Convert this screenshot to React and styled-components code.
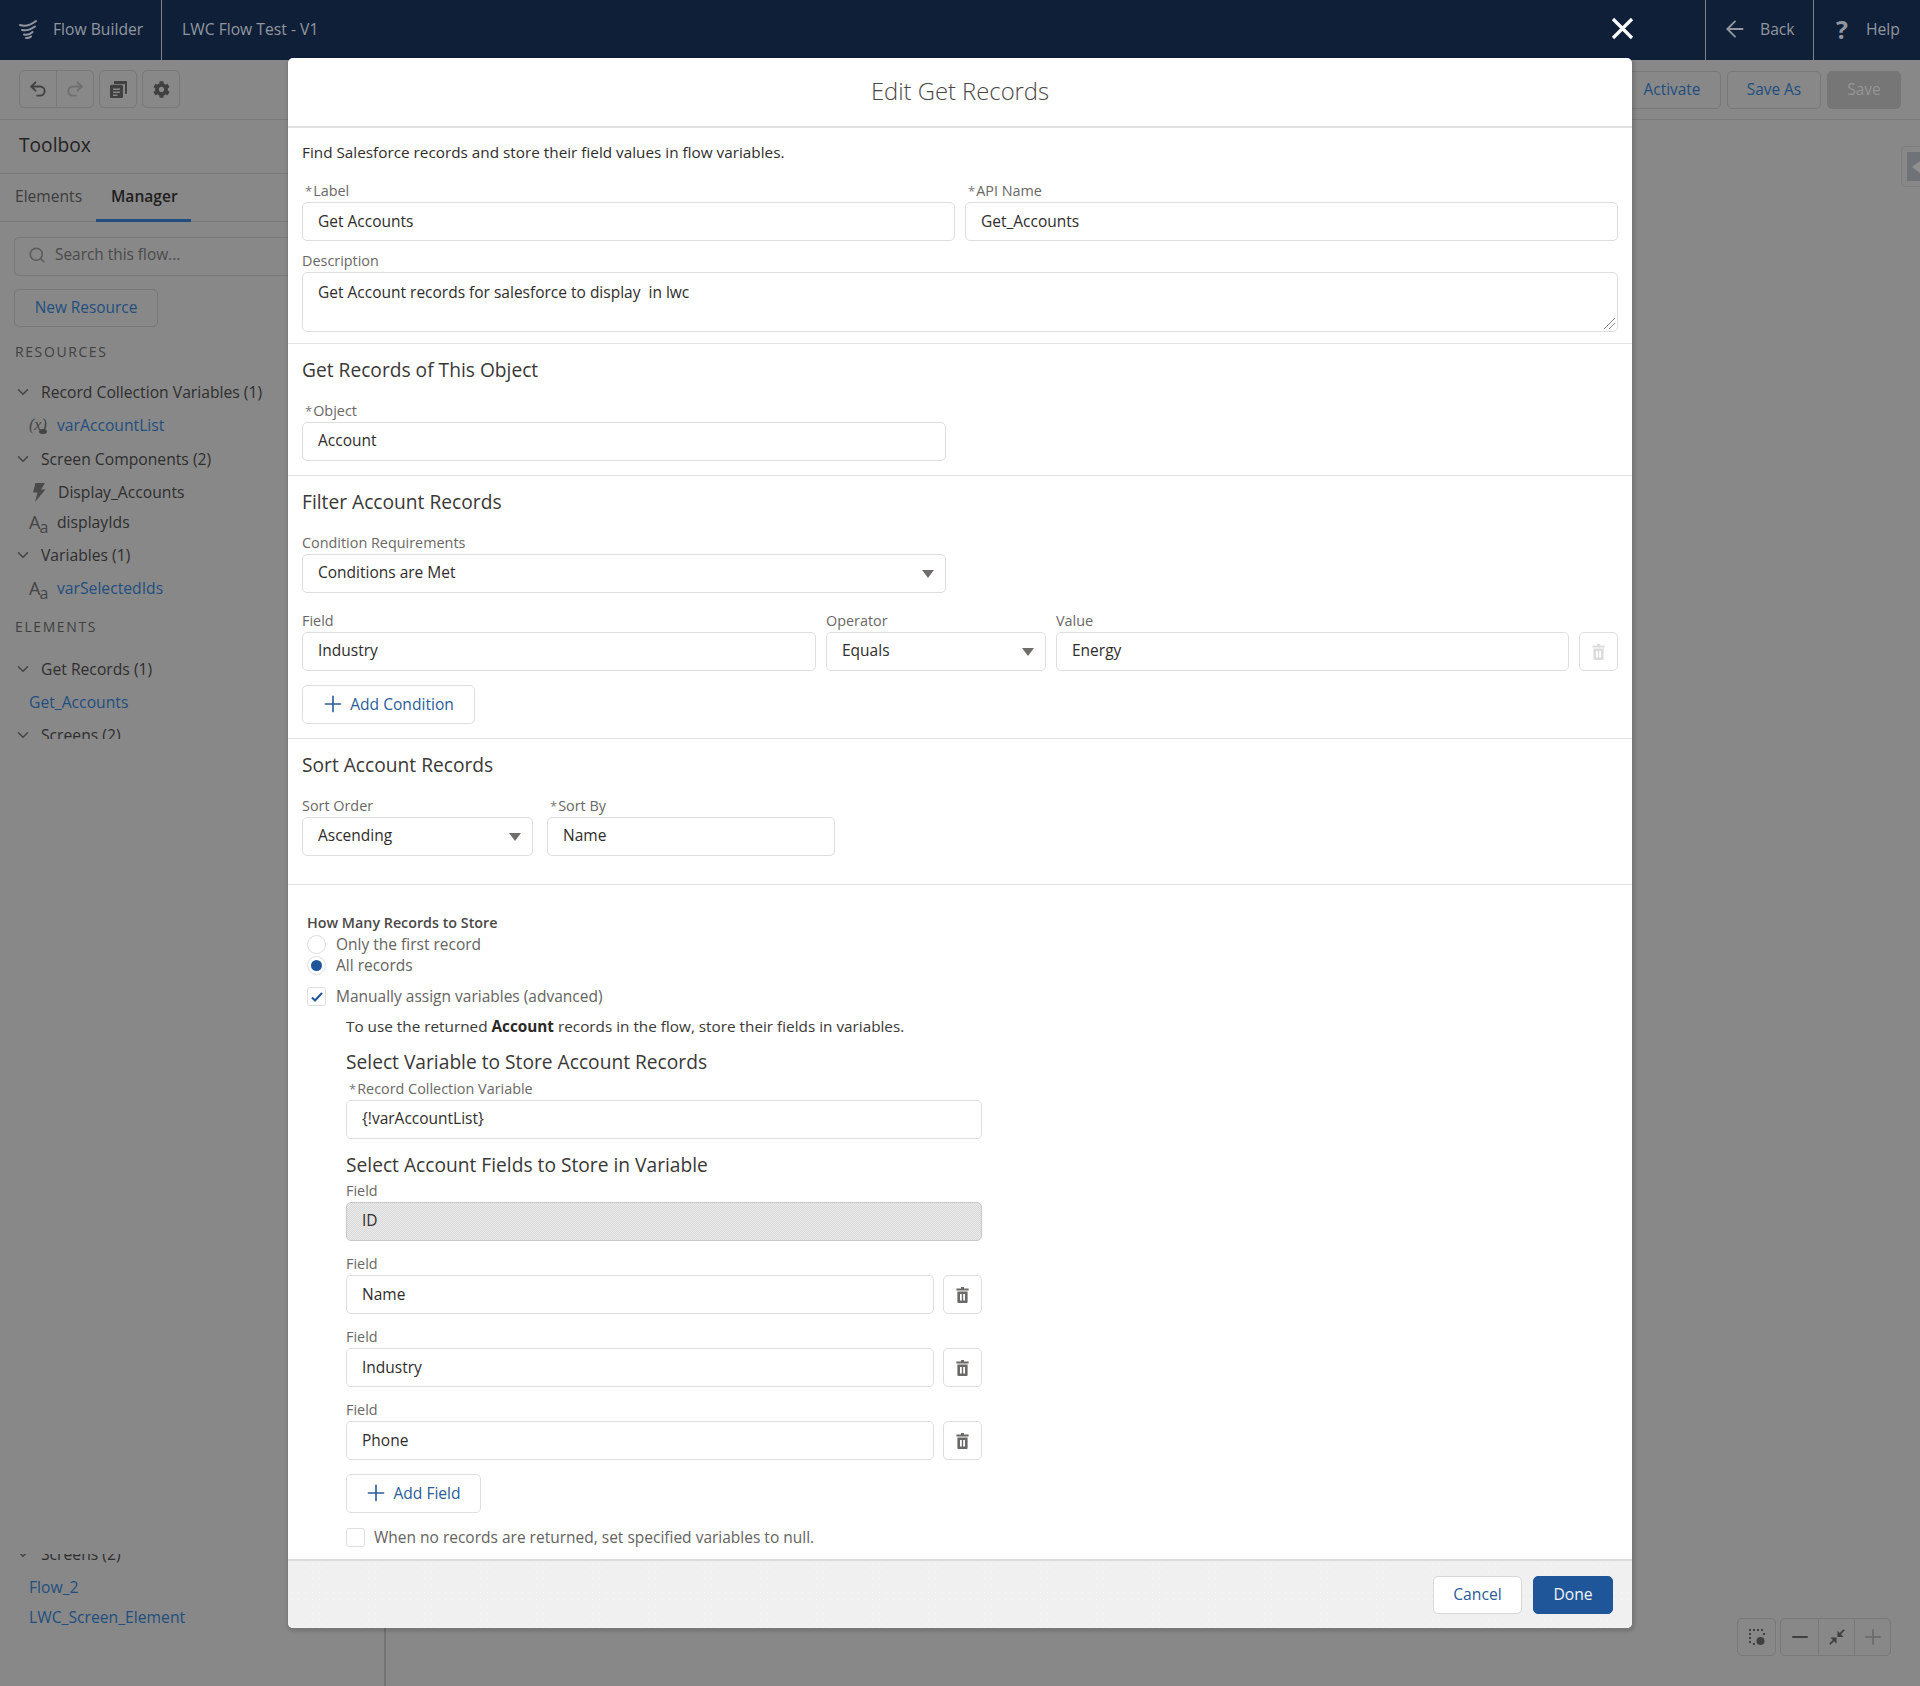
import React from "react";
import styled, { createGlobalStyle } from "styled-components";
import { ArrowLeft, ChevronDown, Minus, Plus, Redo2, Search, Undo2 } from "lucide-react";
import { FaCog } from "react-icons/fa";

const GlobalStyle = createGlobalStyle`
  html, body { margin: 0; padding: 0; background: #888; }
  * { box-sizing: border-box; }
  body { font-family: "Open Sans", "Noto Sans", sans-serif; }
`;

const Page = styled.div`
  position: relative;
  width: 1920px;
  height: 1686px;
  overflow: hidden;
  background: #888;
  display: flex;
  flex-direction: column;
`;

/* top bar */
const TopBar = styled.header`
  height: 60px;
  flex: none;
  display: flex;
  background: #0f1f38;
  color: #92979f;
  font-size: 15.7px;
`;
const BarCell = styled.div`
  display: flex;
  align-items: center;
  gap: ${(p) => p.$gap || 0}px;
  width: ${(p) => p.$width || "auto"};
  padding: 0 0 2px ${(p) => p.$pad || 0}px;
  border-right: ${(p) => (p.$divider ? "1px solid #7d828c" : "none")};
  border-left: ${(p) => (p.$before ? "1px solid #7d828c" : "none")};
`;
const Spacer = styled.div`
  flex: 1;
`;
const HelpMark = styled.strong`
  font-size: 25px;
  line-height: 1;
`;

/* toolbar */
const ToolBar = styled.div`
  height: 60px;
  flex: none;
  display: flex;
  align-items: flex-start;
  padding: 10px 19px 0;
  border-bottom: 1px solid #787878;
`;
const ToolGroup = styled.div`
  display: flex;
  height: 38px;
  border: 1px solid #787878;
  border-radius: 5px;
  margin-right: ${(p) => p.$mr ?? 5}px;
`;
const ToolBtn = styled.div`
  width: ${(p) => p.$w || 36}px;
  display: flex;
  align-items: center;
  justify-content: center;
  color: ${(p) => (p.$off ? "#6f6f6f" : "#404040")};
  & + & { border-left: 1px solid #787878; }
`;
const SaveBtn = styled.div`
  height: 38px;
  width: ${(p) => p.$w}px;
  margin-left: 6px;
  margin-top: 1px;
  padding-bottom: 2px;
  display: flex;
  align-items: center;
  justify-content: center;
  font-size: 15.4px;
  border-radius: 5px;
  border: 1px solid ${(p) => (p.$off ? "#767676" : "#787878")};
  background: ${(p) => (p.$off ? "#767676" : "transparent")};
  color: ${(p) => (p.$off ? "#959595" : "#1f4e7f")};
`;

/* left panel */
const Body = styled.div`
  flex: 1;
  display: flex;
  min-height: 0;
`;
const Sidebar = styled.aside`
  width: 386px;
  flex: none;
  border-right: 2px solid #747474;
  display: flex;
  flex-direction: column;
`;
const ToolboxTitle = styled.div`
  height: 54px;
  flex: none;
  display: flex;
  align-items: center;
  padding: 0 0 4px 19px;
  font-size: 19.2px;
  color: #232323;
  border-bottom: 1px solid #787878;
`;
const Tabs = styled.div`
  height: 48px;
  flex: none;
  display: flex;
  border-bottom: 1px solid #787878;
`;
const Tab = styled.div`
  position: relative;
  width: ${(p) => p.$w}px;
  padding-left: ${(p) => p.$pad}px;
  line-height: 44px;
  font-size: 15.6px;
  font-weight: ${(p) => (p.$active ? 600 : 400)};
  color: ${(p) => (p.$active ? "#1e1e1e" : "#3c3c3c")};
  border-bottom: ${(p) => (p.$active ? "3px solid #1f4e7f" : "none")};
  height: ${(p) => (p.$active ? "48px" : "auto")};
`;
const SearchBox = styled.div`
  height: 39px;
  margin: 15px 0 0 14px;
  width: 360px;
  flex: none;
  display: flex;
  align-items: center;
  gap: 9px;
  padding: 0 0 4px 13px;
  border: 1px solid #787878;
  border-radius: 5px;
  font-size: 15.4px;
  color: #4a4a4a;
`;
const NewResource = styled.div`
  width: 144px;
  height: 38px;
  flex: none;
  margin: 13px 0 0 14px;
  padding-bottom: 2px;
  display: flex;
  align-items: center;
  justify-content: center;
  border: 1px solid #787878;
  border-radius: 5px;
  font-size: 15.4px;
  color: #1f4e7f;
`;
const Caps = styled.div`
  height: 20px;
  line-height: 20px;
  margin: ${(p) => p.$mt}px 0 0 15px;
  font-size: 14px;
  letter-spacing: 1.6px;
  color: #404040;
`;
const TreeClip = styled.div`
  height: ${(p) => p.$h}px;
  flex: none;
  overflow: hidden;
  margin-top: ${(p) => p.$mt || 0}px;
`;
const TreeRow = styled.div`
  height: 30px;
  display: flex;
  align-items: center;
  margin-top: ${(p) => p.$gap ?? 3}px;
  padding-left: ${(p) => p.$pad ?? 14}px;
  font-size: 15.7px;
  color: ${(p) => (p.$link ? "#1f4e7f" : "#2e2e2e")};
  white-space: nowrap;
`;
const TreeIcon = styled.span`
  width: ${(p) => p.$w || 27}px;
  flex: none;
  display: inline-flex;
  align-items: center;
  color: #444;
`;
const VarGlyph = styled.span`
  position: relative;
  font-family: "Liberation Serif", serif;
  font-style: italic;
  font-size: 16px;
  color: #444;
  &::after {
    content: "";
    position: absolute;
    right: 0;
    bottom: 0;
    width: 8px;
    height: 5px;
    border-radius: 50%;
    background: #444;
  }
`;
const TextGlyph = styled.span`
  font-size: 18px;
  color: #444;
  small {
    font-size: 16px;
    position: relative;
    top: 4px;
    margin-left: -1px;
  }
`;

/* canvas */
const Canvas = styled.div`
  position: relative;
  flex: 1;
`;
const CollapseTab = styled.div`
  position: absolute;
  top: 26px;
  right: 0;
  width: 19px;
  height: 41px;
  padding: 5px 0 5px 5px;
  border: 1px solid #7e7e7e;
  border-right: none;
  border-radius: 5px 0 0 5px;
`;
const CollapseInner = styled.div`
  width: 100%;
  height: 100%;
  background: #6f7378;
  display: flex;
  align-items: center;
  justify-content: flex-end;
  &::after {
    content: "";
    border-style: solid;
    border-width: 6px 8px 6px 0;
    border-color: transparent #909090 transparent transparent;
  }
`;
const ZoomBar = styled.div`
  position: absolute;
  right: 29px;
  bottom: 30px;
  display: flex;
  gap: 4px;
`;

/* modal */
const Modal = styled.section`
  position: absolute;
  left: 288px;
  top: 58px;
  width: 1344px;
  height: 1570px;
  background: #fff;
  border-radius: 5px;
  box-shadow: 1px 2px 3px 2px rgba(0, 0, 0, 0.12);
  display: flex;
  flex-direction: column;
`;
const CloseBtn = styled.div`
  position: absolute;
  top: -41px;
  right: -2px;
  width: 23px;
  height: 23px;
  color: #fff;
`;
const ModalHead = styled.div`
  height: 70px;
  flex: none;
  display: flex;
  align-items: center;
  justify-content: center;
  padding-bottom: 2px;
  font-size: 23.8px;
  font-weight: 300;
  color: #4a4846;
  border-bottom: 2px solid #e0e0e0;
`;
const ModalBody = styled.div`
  flex: 1;
  min-height: 0;
  overflow: hidden;
`;
const Section = styled.div`
  padding: 14px 14px ${(p) => p.$pb ?? 14}px;
  border-bottom: ${(p) => (p.$last ? "none" : "1px solid #e2e2e2")};
`;
const Intro = styled.p`
  margin: 0 0 19px;
  line-height: 20px;
  font-size: 15.3px;
  color: #2f2d2b;
`;
const Row = styled.div`
  display: flex;
  gap: ${(p) => p.$gap ?? 10}px;
  margin-top: ${(p) => p.$mt || 0}px;
  align-items: flex-end;
`;
const Field = styled.div`
  width: ${(p) => p.$w || "auto"};
  flex: ${(p) => (p.$w ? "none" : 1)};
  margin-top: ${(p) => p.$mt || 0}px;
`;
const Label = styled.div`
  height: 21px;
  line-height: 19px;
  font-size: 14.4px;
  color: #6a6866;
  padding-left: ${(p) => (p.$required ? 3 : 0)}px;
  &::before {
    content: ${(p) => (p.$required ? '"*"' : "none")};
    margin-right: 1px;
    font-size: 13px;
    color: #7a7876;
  }
`;
const Box = styled.div`
  position: relative;
  height: ${(p) => p.$h || 39}px;
  display: flex;
  align-items: ${(p) => (p.$area ? "flex-start" : "center")};
  justify-content: space-between;
  padding: ${(p) => (p.$area ? "8px 14px 0 15px" : `0 14px ${p.$low ? 1 : 3}px 15px`)};
  background: ${(p) =>
    p.$disabled ? "repeating-conic-gradient(#d9d9d9 0 25%, #ebebeb 0 50%) 0 0 / 2px 2px" : "#fff"};
  border: 1px solid ${(p) => (p.$disabled ? "#c8c8c8" : "#dedede")};
  border-radius: 5px;
  font-size: 15.5px;
  color: #2f2d2b;
`;
const Caret = styled.span`
  border-style: solid;
  border-width: 8px 6.5px 0;
  border-color: #706e6b transparent transparent;
  margin: 4px -3px 0 0;
`;
const Grip = styled.svg`
  position: absolute;
  right: 1px;
  bottom: 1px;
`;
const SectionTitle = styled.h3`
  margin: 0 0 ${(p) => p.$mb ?? 19}px;
  height: 24px;
  line-height: 23px;
  font-size: 19.2px;
  font-weight: 400;
  color: #3a3836;
`;
const AddBtn = styled.div`
  width: ${(p) => p.$w}px;
  height: 39px;
  margin-top: ${(p) => p.$mt}px;
  padding: 0 3px 2px 0;
  display: flex;
  align-items: center;
  justify-content: center;
  gap: 4px;
  border: 1px solid #dedede;
  border-radius: 5px;
  font-size: 15.6px;
  color: #2a5c98;
`;
const IconBtn = styled.div`
  width: 39px;
  height: 39px;
  flex: none;
  display: flex;
  align-items: center;
  justify-content: center;
  border: 1px solid #dedede;
  border-radius: 5px;
  color: ${(p) => (p.$off ? "#dcdcdc" : "#6b6967")};
`;
const GroupLabel = styled.div`
  height: 21px;
  line-height: 20px;
  margin: 14px 0 0 5px;
  font-size: 14.3px;
  font-weight: 600;
  color: #4a4846;
`;
const ChoiceRow = styled.div`
  height: 21px;
  margin: ${(p) => p.$mt || 0}px 0 0 5px;
  padding-bottom: 2px;
  display: flex;
  align-items: center;
  gap: 10px;
  font-size: 15.5px;
  color: #656361;
`;
const Radio = styled.span`
  width: 19px;
  height: 19px;
  flex: none;
  margin-top: 2px;
  border: 1px solid #dedede;
  border-radius: 50%;
  display: flex;
  align-items: center;
  justify-content: center;
  &::after {
    content: "";
    width: 11px;
    height: 11px;
    border-radius: 50%;
    background: ${(p) => (p.$on ? "#1f5699" : "transparent")};
  }
`;
const Check = styled.span`
  width: 19px;
  height: 19px;
  flex: none;
  margin-top: 2px;
  display: flex;
  align-items: center;
  justify-content: center;
  border: 1px solid #dedede;
  border-radius: 3px;
`;
const Indented = styled.div`
  width: 636px;
  margin-left: 44px;
`;
const Hint = styled.p`
  margin: 9px 0 0;
  line-height: 20px;
  font-size: 15.3px;
  color: #3a3836;
  white-space: nowrap;
  b {
    font-weight: 700;
    color: #2b2927;
  }
`;
const SubTitle = styled(SectionTitle)`
  margin: ${(p) => p.$mt}px 0 ${(p) => p.$mb}px;
  white-space: nowrap;
`;
const NullRow = styled(ChoiceRow)`
  margin-left: 0;
  gap: 9px;
`;
const Footer = styled.div`
  height: 69px;
  flex: none;
  display: flex;
  align-items: center;
  justify-content: flex-end;
  gap: 11px;
  padding-right: 19px;
  border-top: 2px solid #dcdcdc;
  border-radius: 0 0 5px 5px;
  background-color: #f0f0f0;
  background-image: radial-gradient(#f8f8f8 0.6px, transparent 0.8px);
  background-size: 7px 7px;
`;
const FootBtn = styled.div`
  width: ${(p) => p.$w}px;
  height: 38px;
  padding-bottom: 1px;
  display: flex;
  align-items: center;
  justify-content: center;
  border-radius: 5px;
  font-size: 15.7px;
  border: 1px solid ${(p) => (p.$primary ? "#1f5699" : "#d8d8d8")};
  background: ${(p) => (p.$primary ? "#1f5699" : "#fff")};
  color: ${(p) => (p.$primary ? "#f4f4f4" : "#2a5c98")};
`;

const Trash = () => (
  <svg width="13" height="16" viewBox="0 0 13 16" fill="currentColor">
    <path d="M5 0h3v1.4h4.6V3.4H.4V1.4H5zM1.4 4.6h10.200V15a1 1 0 0 1-1 1H2.400a1 1 0 0 1-1-1zM4 7v6.500h1.800V7zm3.200 0v6.500H9V7z" fillRule="evenodd" />
  </svg>
);

const FlowLogo = () => (
  <svg width="19" height="20" viewBox="0 0 19 20" fill="none" stroke="#92979f" strokeWidth="2" strokeLinecap="round">
    <path d="M1 6c4 1.500 10 .5 16-4" />
    <path d="M3 11c4 1 8 0 13-3.500" />
    <path d="M5 15.500c3 .8 6 0 8.500-2.500" />
    <path d="M7 19c2 .2 3.500-.2 5-1.500" />
  </svg>
);

const CopyIcon = () => (
  <svg width="17" height="17" viewBox="0 0 17 17" fill="#404040">
    <path d="M4 0h12a1 1 0 0 1 1 1v11a1 1 0 0 1-1 1h-1V3H4z" />
    <path d="M1.500 3.800h10a1.500 1.500 0 0 1 1.500 1.500v10.200a1.500 1.500 0 0 1-1.500 1.500h-10A1.500 1.500 0 0 1 0 15.500V5.300a1.500 1.500 0 0 1 1.500-1.500zM3 7.500v1.500h7V7.500zm0 3v1.500h7v-1.500zm0 3V15h4.500v-1.500z" fillRule="evenodd" />
  </svg>
);

const Bolt = () => (
  <svg width="14" height="19" viewBox="0 0 14 19" fill="#4a4a4a">
    <path d="M3.500 0h9.500L9 6.500h4.500L3 19l2.500-9.500H1z" />
  </svg>
);

const Marquee = () => (
  <svg width="16" height="16" viewBox="0 0 16 16" fill="#404040">
    <path d="M0 0h2v2H0zM4 0h2v2H4zM8 0h2v2H8zM12 0h2v2h-2zM0 4h2v2H0zM0 8h2v2H0zM0 12h2v2H0zM4 14h2v2H4zM14 4h2v2h-2z" />
    <circle cx="11.500" cy="12" r="4" />
  </svg>
);

const Shrink = () => (
  <svg width="16" height="16" viewBox="0 0 18 18" fill="#404040" stroke="#404040">
    <path d="M11 7l6-6" strokeWidth="2" fill="none" />
    <path d="M9.500 2v7h7z" stroke="none" />
    <path d="M7 11l-6 6" strokeWidth="2" fill="none" />
    <path d="M1.500 9.500h7v7z" stroke="none" />
  </svg>
);

const fieldRows = ["Name", "Industry", "Phone"];

const App = () => (
  <Page>
    <GlobalStyle />
    <TopBar>
      <BarCell $width="162px" $pad={19} $gap={15} $divider>
        <FlowLogo />
        <span>Flow Builder</span>
      </BarCell>
      <BarCell $pad={20}>LWC Flow Test - V1</BarCell>
      <Spacer />
      <BarCell $width="108px" $pad={16} $gap={12} $before>
        <ArrowLeft size={26} strokeWidth={1.7} />
        <span>Back</span>
      </BarCell>
      <BarCell $width="107px" $pad={22} $gap={18} $before>
        <HelpMark>?</HelpMark>
        <span>Help</span>
      </BarCell>
    </TopBar>
    <ToolBar>
      <ToolGroup>
        <ToolBtn>
          <Undo2 size={20} strokeWidth={2.2} />
        </ToolBtn>
        <ToolBtn $w={37} $off>
          <Redo2 size={20} strokeWidth={2.2} />
        </ToolBtn>
      </ToolGroup>
      <ToolGroup>
        <ToolBtn>
          <CopyIcon />
        </ToolBtn>
      </ToolGroup>
      <ToolGroup>
        <ToolBtn>
          <FaCog size={17} />
        </ToolBtn>
      </ToolGroup>
      <Spacer />
      <SaveBtn $w={98}>Activate</SaveBtn>
      <SaveBtn $w={94}>Save As</SaveBtn>
      <SaveBtn $w={74} $off>
        Save
      </SaveBtn>
    </ToolBar>
    <Body>
      <Sidebar>
        <ToolboxTitle>Toolbox</ToolboxTitle>
        <Tabs>
          <Tab $w={96} $pad={15}>
            Elements
          </Tab>
          <Tab $w={95} $pad={15} $active>
            Manager
          </Tab>
        </Tabs>
        <SearchBox>
          <Search size={18} color="#5a5a5a" />
          <span>Search this flow...</span>
        </SearchBox>
        <NewResource>New Resource</NewResource>
        <Caps $mt={15}>RESOURCES</Caps>
        <TreeClip $h={377}>
          <TreeRow $gap={15}>
            <TreeIcon>
              <ChevronDown size={18} />
            </TreeIcon>
            Record Collection Variables (1)
          </TreeRow>
          <TreeRow $pad={29} $link>
            <TreeIcon $w={28}>
              <VarGlyph>(x)</VarGlyph>
            </TreeIcon>
            varAccountList
          </TreeRow>
          <TreeRow $gap={4}>
            <TreeIcon>
              <ChevronDown size={18} />
            </TreeIcon>
            Screen Components (2)
          </TreeRow>
          <TreeRow $pad={32}>
            <TreeIcon $w={26}>
              <Bolt />
            </TreeIcon>
            Display_Accounts
          </TreeRow>
          <TreeRow $pad={29} $gap={0}>
            <TreeIcon $w={28}>
              <TextGlyph>
                A<small>a</small>
              </TextGlyph>
            </TreeIcon>
            displayIds
          </TreeRow>
          <TreeRow>
            <TreeIcon>
              <ChevronDown size={18} />
            </TreeIcon>
            Variables (1)
          </TreeRow>
          <TreeRow $pad={29} $link>
            <TreeIcon $w={28}>
              <TextGlyph>
                A<small>a</small>
              </TextGlyph>
            </TreeIcon>
            varSelectedIds
          </TreeRow>
          <Caps $mt={14}>ELEMENTS</Caps>
          <TreeRow $gap={17}>
            <TreeIcon>
              <ChevronDown size={18} />
            </TreeIcon>
            Get Records (1)
          </TreeRow>
          <TreeRow $pad={29} $link>
            Get_Accounts
          </TreeRow>
          <TreeRow>
            <TreeIcon>
              <ChevronDown size={18} />
            </TreeIcon>
            Screens (2)
          </TreeRow>
        </TreeClip>
        <TreeClip $h={110} $mt={815}>
          <TreeRow $gap={-15}>
            <TreeIcon>
              <ChevronDown size={18} />
            </TreeIcon>
            Screens (2)
          </TreeRow>
          <TreeRow $pad={29} $link>
            Flow_2
          </TreeRow>
          <TreeRow $pad={29} $gap={0} $link>
            LWC_Screen_Element
          </TreeRow>
        </TreeClip>
      </Sidebar>
      <Canvas>
        <CollapseTab>
          <CollapseInner />
        </CollapseTab>
        <ZoomBar>
          <ToolGroup $mr={0}>
            <ToolBtn $w={37}>
              <Marquee />
            </ToolBtn>
          </ToolGroup>
          <ToolGroup $mr={0}>
            <ToolBtn $w={37}>
              <Minus size={24} strokeWidth={2.2} />
            </ToolBtn>
            <ToolBtn $w={36}>
              <Shrink />
            </ToolBtn>
            <ToolBtn $w={36} $off>
              <Plus size={24} />
            </ToolBtn>
          </ToolGroup>
        </ZoomBar>
      </Canvas>
    </Body>

    <Modal>
      <CloseBtn>
        <svg width="23" height="23" viewBox="0 0 23 23" stroke="currentColor" strokeWidth="3.2">
          <path d="M2 2l19 19M21 2L2 21" />
        </svg>
      </CloseBtn>
      <ModalHead>Edit Get Records</ModalHead>
      <ModalBody>
        <Section $pb={11}>
          <Intro>Find Salesforce records and store their field values in flow variables.</Intro>
          <Row>
            <Field>
              <Label $required>Label</Label>
              <Box $low>Get Accounts</Box>
            </Field>
            <Field>
              <Label $required>API Name</Label>
              <Box $low>Get_Accounts</Box>
            </Field>
          </Row>
          <Field $mt={10}>
            <Label>Description</Label>
            <Box $h={60} $area>
              Get Account records for salesforce to display&nbsp; in lwc
              <Grip width="14" height="14" viewBox="0 0 14 14" stroke="#8a8a8a" fill="none">
                <path d="M13 2L2 13M13 7l-6 6" />
              </Grip>
            </Box>
          </Field>
        </Section>

        <Section>
          <SectionTitle>Get Records of This Object</SectionTitle>
          <Field $w="644px">
            <Label $required>Object</Label>
            <Box>Account</Box>
          </Field>
        </Section>

        <Section>
          <SectionTitle>Filter Account Records</SectionTitle>
          <Field $w="644px">
            <Label>Condition Requirements</Label>
            <Box>
              Conditions are Met
              <Caret />
            </Box>
          </Field>
          <Row $mt={18}>
            <Field $w="514px">
              <Label>Field</Label>
              <Box>Industry</Box>
            </Field>
            <Field $w="220px">
              <Label>Operator</Label>
              <Box>
                Equals
                <Caret />
              </Box>
            </Field>
            <Field>
              <Label>Value</Label>
              <Box>Energy</Box>
            </Field>
            <IconBtn $off>
              <Trash />
            </IconBtn>
          </Row>
          <AddBtn $w={173} $mt={14}>
            <Plus size={26} strokeWidth={1.5} />
            Add Condition
          </AddBtn>
        </Section>

        <Section $pb={28}>
          <SectionTitle>Sort Account Records</SectionTitle>
          <Row $gap={14}>
            <Field $w="231px">
              <Label>Sort Order</Label>
              <Box>
                Ascending
                <Caret />
              </Box>
            </Field>
            <Field $w="288px">
              <Label $required>Sort By</Label>
              <Box>Name</Box>
            </Field>
          </Row>
        </Section>

        <Section $last>
          <GroupLabel>How Many Records to Store</GroupLabel>
          <ChoiceRow>
            <Radio />
            Only the first record
          </ChoiceRow>
          <ChoiceRow>
            <Radio $on />
            All records
          </ChoiceRow>
          <ChoiceRow $mt={10}>
            <Check>
              <svg width="12" height="10" viewBox="0 0 12 10" fill="none" stroke="#1f5699" strokeWidth="2">
                <path d="M1 5.5l3 3 7-7.5" />
              </svg>
            </Check>
            Manually assign variables (advanced)
          </ChoiceRow>
          <Indented>
            <Hint>
              To use the returned <b>Account</b> records in the flow, store their fields in variables.
            </Hint>
            <SubTitle $mt={14} $mb={5}>
              Select Variable to Store Account Records
            </SubTitle>
            <Label $required>Record Collection Variable</Label>
            <Box>{"{!varAccountList}"}</Box>
            <SubTitle $mt={14} $mb={4}>
              Select Account Fields to Store in Variable
            </SubTitle>
            <Label>Field</Label>
            <Box $disabled>ID</Box>
            {fieldRows.map((name) => (
              <Row key={name} $mt={13} $gap={9}>
                <Field>
                  <Label>Field</Label>
                  <Box $low>{name}</Box>
                </Field>
                <IconBtn>
                  <Trash />
                </IconBtn>
              </Row>
            ))}
            <AddBtn $w={135} $mt={14}>
              <Plus size={26} strokeWidth={1.5} />
              Add Field
            </AddBtn>
            <NullRow $mt={14}>
              <Check />
              When no records are returned, set specified variables to null.
            </NullRow>
          </Indented>
        </Section>
      </ModalBody>
      <Footer>
        <FootBtn $w={89}>Cancel</FootBtn>
        <FootBtn $w={80} $primary>
          Done
        </FootBtn>
      </Footer>
    </Modal>
  </Page>
);

export default App;
